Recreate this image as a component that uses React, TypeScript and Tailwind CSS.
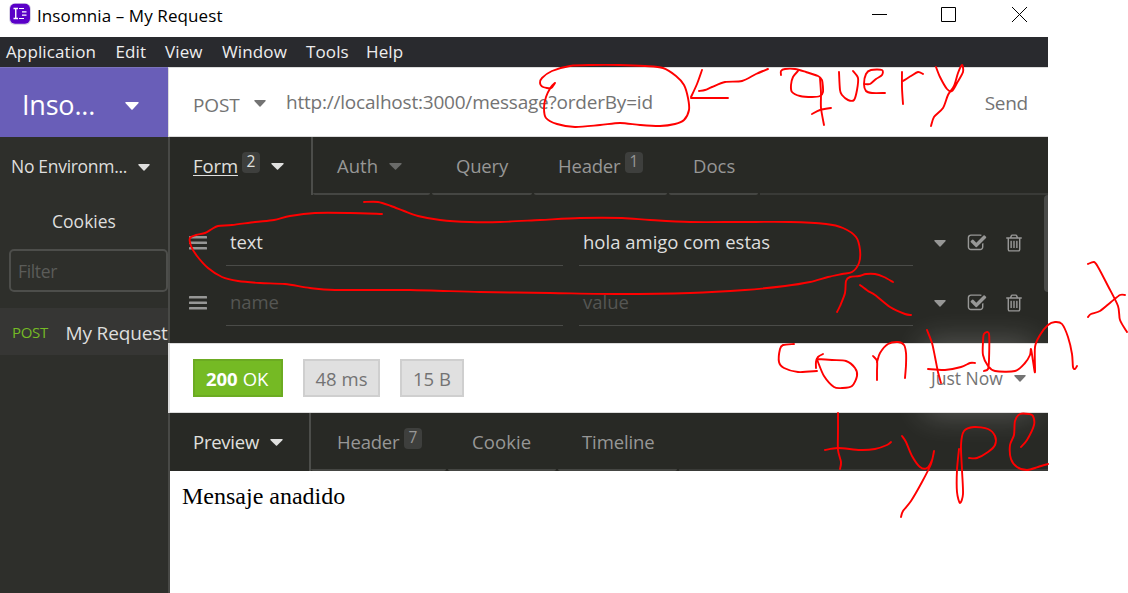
import type { ReactNode } from "react";

function T({ c = "", children }: { c?: string; children: string }) {
  return <span className={"whitespace-pre " + c}>{children}</span>;
}

function Caret({ c }: { c: string }) {
  return (
    <svg viewBox="0 0 14 8" preserveAspectRatio="none" className={"shrink-0 " + c} fill="currentColor">
      <path d="M1 0h12q1 0 .6 1L7.6 7.5q-.6.6-1.2 0L.4 1Q0 0 1 0z" />
    </svg>
  );
}

function Badge({ c, children }: { c: string; children: ReactNode }) {
  return (
    <span className={"flex h-[21px] w-[18px] shrink-0 items-center justify-center rounded-[4px] bg-[#3e3f3d] text-[15.5px] " + c}>
      {children}
    </span>
  );
}

function Logo() {
  return (
    <svg viewBox="0 0 22 22" className="h-[22px] w-[22px]">
      <rect x="0" y="0" width="22" height="22" rx="6" fill="#d9d3e6" />
      <rect x="1" y="0.7" width="20" height="20" rx="5" fill="#5a00c8" />
      <path d="M4.5 5.5h4.5M6.75 5.5v10M4.5 15.5h4.5" stroke="#fff" strokeWidth="1.4" fill="none" />
      <path d="M10 5.5h5M13 8.8h4.5M13 12.1h4.5M10 15.5h5" stroke="#fff" strokeWidth="1.2" fill="none" />
    </svg>
  );
}

function Bars() {
  return (
    <svg viewBox="0 0 18 16" className="h-4 w-[18px] shrink-0" fill="#979796">
      <rect y="1" width="18" height="2.6" rx="0.6" />
      <rect y="6.5" width="18" height="2.6" rx="0.6" />
      <rect y="12" width="18" height="2.6" rx="0.6" />
    </svg>
  );
}

function Check() {
  return (
    <svg viewBox="0 0 1792 1792" className="h-5 w-5 shrink-0" fill="#979796">
      <path d="M1472 930v318q0 119-84.5 203.5t-203.5 84.5h-832q-119 0-203.5-84.5t-84.5-203.5v-832q0-119 84.5-203.5t203.5-84.5h832q63 0 117 25 15 7 18 23 3 17-9 29l-49 49q-10 10-23 10-3 0-9-2-23-6-45-6h-832q-66 0-113 47t-47 113v832q0 66 47 113t113 47h832q66 0 113-47t47-113v-254q0-13 9-22l64-64q10-10 23-10 6 0 12 3 20 8 20 29zm231-489l-814 814q-24 24-57 24t-57-24l-430-430q-24-24-24-57t24-57l110-110q24-24 57-24t57 24l263 263 647-647q24-24 57-24t57 24l110 110q24 24 24 57t-24 57z" />
    </svg>
  );
}

function Trash() {
  return (
    <svg viewBox="0 0 1792 1792" className="h-5 w-5 shrink-0" fill="#979796">
      <path d="M704 736v576q0 14-9 23t-23 9h-64q-14 0-23-9t-9-23v-576q0-14 9-23t23-9h64q14 0 23 9t9 23zm256 0v576q0 14-9 23t-23 9h-64q-14 0-23-9t-9-23v-576q0-14 9-23t23-9h64q14 0 23 9t9 23zm256 0v576q0 14-9 23t-23 9h-64q-14 0-23-9t-9-23v-576q0-14 9-23t23-9h64q14 0 23 9t9 23zm128 724v-948h-896v948q0 22 7 40.5t14.5 27 10.5 8.5h832q3 0 10.5-8.5t14.5-27 7-40.5zm-672-1076h448l-48-117q-7-9-17-11h-317q-10 2-17 11zm928 32v64q0 14-9 23t-23 9h-96v948q0 83-47 143.5t-113 60.5h-832q-66 0-113-58.5t-47-141.5v-952h-96q-14 0-23-9t-9-23v-64q0-14 9-23t23-9h309l70-167q15-37 54-63t79-26h320q40 0 79 26t54 63l70 167h309q14 0 23 9t9 23z" />
    </svg>
  );
}

function TitleBar() {
  return (
    <header className="flex h-[37px] w-[1048px] items-start pl-[9px]">
      <div className="pt-[3px]"><Logo /></div>
      <T c="ml-1.5 pt-1 text-[17px] leading-6 tracking-[0.1px] text-black">Insomnia – My Request</T>
      <div className="ml-auto flex pt-[7px] text-black">
        <svg viewBox="0 0 15 15" className="mr-[54px] h-[15px] w-[15px]"><path d="M0 7.5h15" stroke="currentColor" /></svg>
        <svg viewBox="0 0 15 15" className="mr-[56px] h-[15px] w-[15px]"><path d="M.5.5h14v14H.5z" stroke="currentColor" fill="none" /></svg>
        <svg viewBox="0 0 15 15" className="mr-[21px] h-[15px] w-[15px]"><path d="M0 0l15 15M15 0L0 15" stroke="currentColor" /></svg>
      </div>
    </header>
  );
}

function MenuBar() {
  return (
    <nav className="flex h-[30px] w-[1048px] items-center bg-[#292a2e] pl-1.5 text-[17px] tracking-[0.12px] text-[#eeeeef]">
      <span className="w-[109.5px]"><T>Application</T></span>
      <span className="w-[49.5px]"><T>Edit</T></span>
      <span className="w-[57px]"><T>View</T></span>
      <span className="w-[84px]"><T>Window</T></span>
      <span className="w-[60px]"><T>Tools</T></span>
      <span className="w-[50px]"><T>Help</T></span>
    </nav>
  );
}

function Sidebar() {
  return (
    <aside className="flex w-[168px] shrink-0 flex-col bg-[#2e2f2b] text-[#dededd]">
      <div className="flex h-[69.5px] items-center border-t border-[#7b73bd] bg-[#695eb8] pl-[22px] text-white">
        <span className="w-[103px] pt-[5px]"><T c="text-[27px] tracking-[-0.2px]">Inso...</T></span>
        <Caret c="mt-2 h-2 w-[14px]" />
      </div>
      <div className="flex h-[59.5px] items-center pl-[11px] text-[17.5px]">
        <span className="w-[127px] pb-px"><T c="tracking-[-0.3px]">No Environm...</T></span>
        <Caret c="mt-0.5 h-[7px] w-3" />
      </div>
      <div className="flex h-[53px] items-center justify-center pb-0.5 text-[17.5px]"><T>Cookies</T></div>
      <div className="ml-[9px] flex h-[43px] w-[159px] items-center rounded-[5px] border-2 border-[#4d4e4b] pl-[7px] pt-0.5 text-[17.5px] text-[#5b5c59]">
        <T c="tracking-[-0.35px]">Filter</T>
      </div>
      <div className="mt-4 flex h-[47px] items-center overflow-hidden bg-[#363634] pl-3">
        <span className="w-[53.5px] shrink-0 pt-0.5 text-[15px] text-[#75ba24]"><T c="tracking-[-0.3px]">POST</T></span>
        <T c="pt-[3px] text-[19px] tracking-[-0.15px]">My Request</T>
      </div>
    </aside>
  );
}

function RequestBar() {
  return (
    <div className="flex h-[70px] items-center border-y border-[#dcdcdc] bg-white pl-6 text-[19px] text-[#737373]">
      <span className="w-[61px] pt-[6px]"><T c="tracking-[-0.15px]">POST</T></span>
      <span className="w-8 pt-0.5"><Caret c="h-[7px] w-3" /></span>
      <T c="tracking-[-0.21px]">http://localhost:3000/message?orderBy=id</T>
      <span className="ml-auto pr-5 pt-0.5"><T c="tracking-[-0.25px]">Send</T></span>
    </div>
  );
}

function Tab({ c, children }: { c: string; children: ReactNode }) {
  return (
    <div className={"mr-0.5 flex shrink-0 items-center rounded-b-[2px] border-b-2 border-[#454643] pt-0.5 text-[#979796] " + c}>
      {children}
    </div>
  );
}

function RequestTabs() {
  return (
    <div className="flex h-[58px] text-[18.5px]">
      <div className="flex w-[143px] shrink-0 items-center border-r-2 border-[#4c4d4a] pl-[23px] text-[#e0e0df]">
        <span className="w-[49px] underline decoration-[1px] underline-offset-2"><T c="tracking-[-0.1px]">Form</T></span>
        <Badge c="mr-[11px] -mt-2">2</Badge>
        <Caret c="h-[7px] w-[13px]" />
      </div>
      <Tab c="w-[117px] pl-6"><span className="w-[52px]"><T>Auth</T></span><Caret c="h-[7px] w-[13px] text-[#6a6b69]" /></Tab>
      <Tab c="w-[100px] pl-6"><T c="tracking-[-0.2px]">Query</T></Tab>
      <Tab c="w-[133px] pl-6"><span className="w-[67px]"><T c="tracking-[-0.2px]">Header</T></span><Badge c="-mt-2">1</Badge></Tab>
      <Tab c="w-[89px] pl-6"><T>Docs</T></Tab>
      <div className="flex-1 border-b-2 border-[#393a37]" />
    </div>
  );
}

function Row({ name, value, color }: { name: string; value: string; color: string }) {
  return (
    <div className="flex h-[60px] items-start pl-[19px]">
      <span className="mr-[19px] pt-[18px]"><Bars /></span>
      <div className={"mr-4 flex h-[49px] w-[337px] items-center border-b-[1.5px] border-[#4a4b48] pl-1 pt-px text-[18.5px] " + color}><T c="tracking-[-0.1px]">{name}</T></div>
      <div className={"flex h-[49px] w-[334px] items-center border-b-[1.5px] border-[#4a4b48] pl-1 pt-px text-[18.5px] " + color}><T>{value}</T></div>
      <div className="flex items-center pl-[21px] pt-4 text-[#979796]">
        <Caret c="mr-[21px] h-[7px] w-3" />
        <Check />
        <span className="w-[17px]" />
        <Trash />
      </div>
    </div>
  );
}

function ResponseBar() {
  return (
    <div className="-ml-0.5 flex h-[70px] items-center border-y border-l-2 border-[#dcdcdc] bg-white pl-[23px] text-[18.5px] text-[#737373]">
      <div className="mr-5 flex h-[38px] w-[90px] items-center justify-center border-2 border-[#6cab22] bg-[#75ba24] pr-0.5 pt-px text-white">
        <T c="font-bold">200</T><T c="ml-[5px] tracking-[-0.2px]">OK</T>
      </div>
      <div className="mr-5 flex h-[38px] w-[77px] items-center justify-center border-2 border-[#cfcfcf] bg-[#e0e0e0] pt-0.5"><T>48 ms</T></div>
      <div className="flex h-[38px] w-[64px] items-center justify-center border-2 border-[#cfcfcf] bg-[#e0e0e0] pt-0.5"><T>15 B</T></div>
      <div className="ml-auto mr-[22px] flex h-[60px] items-center bg-white shadow-[0_0_30px_8px_rgba(255,255,255,0.22)]">
        <span className="w-[83px] text-[17.5px]"><T>Just Now</T></span>
        <Caret c="h-[7px] w-3" />
      </div>
    </div>
  );
}

function ResponseTabs() {
  return (
    <div className="flex h-[58px] text-[18.5px]">
      <div className="flex w-[141px] shrink-0 items-center border-r-2 border-[#4c4d4a] pl-[23px] text-[#e0e0df]">
        <span className="w-[77px]"><T c="tracking-[-0.25px]">Preview</T></span>
        <Caret c="h-[7px] w-[13px]" />
      </div>
      <Tab c="w-[135px] pl-[26px]"><span className="w-[67px]"><T c="tracking-[-0.2px]">Header</T></span><Badge c="-mt-2">7</Badge></Tab>
      <Tab c="w-[108px] pl-6"><T c="tracking-[0.1px]">Cookie</T></Tab>
      <Tab c="w-[119px] pl-6"><T c="tracking-[-0.1px]">Timeline</T></Tab>
      <div className="flex-1 border-b-2 border-[#393a37]" />
    </div>
  );
}

// Pen annotations: each entry is the x,y points of one stroke.
const strokes = [
  // ring round the query string
  [555,83, 551,88, 543,87, 540,83, 542,78, 552,71, 570,66, 592,65, 620,65, 645,66, 663,68, 676,76, 684,85, 688,98, 689,110, 684,120, 675,124, 660,126, 640,125, 620,123, 600,125, 575,127, 557,124, 546,118, 544,108, 546,97, 551,87, 555,83],
  [702,70, 697,84, 691,97],
  [691,98, 728,98],
  [699,91, 705,90, 712,87, 725,82, 742,81, 756,74, 768,69],
  [781,75, 781,71, 785,69, 795,69, 806,72, 818,76, 822,80, 823,92, 820,96, 812,97, 800,96, 792,92, 791,85, 793,77, 798,71],
  [820,78, 821,93, 821,108, 824,125],
  [812,114, 820,110, 831,108],
  [839,72, 840,90, 842,95, 848,100, 854,100, 857,90, 858,78, 853,71],
  [865,84, 870,84, 876,79, 882,75, 882,70, 871,70, 866,74, 864,84, 866,91, 872,93, 885,93],
  [902,72, 902,88, 903,104],
  [903,81, 911,76, 918,72, 923,74],
  [936,67, 940,77, 947,89, 952,91, 957,83, 963,72, 962,65, 958,73, 954,86, 948,95, 943,108, 934,117, 931,126],
  // ring round the first form row
  [364,202, 378,202, 391,206, 404,211, 418,216, 440,220, 470,222, 500,222, 540,220, 580,218, 622,218, 650,220, 690,222, 740,222, 790,222, 826,224, 843,228, 856,237, 860,250, 859,263, 852,272, 842,274, 828,277, 810,282, 785,286, 745,290, 690,293, 620,294, 550,293, 480,292, 410,290, 335,290, 310,288, 285,284, 260,283, 238,281, 222,277, 208,268, 197,256, 191,246, 190,238, 196,235, 205,233, 212,229, 218,226, 232,225, 255,222, 274,220, 290,216, 315,213, 350,213, 382,214],
  [837,312, 840,306, 845,293, 846,281, 850,277, 859,276, 866,274, 875,274, 884,277, 893,282],
  [860,285, 868,291, 875,295, 890,307, 905,314, 911,315],
  // lower note
  [794,344, 783,345, 780,349, 779,362, 784,368, 798,372, 817,371],
  [823,354, 818,357, 816,362, 816,368],
  [817,359, 832,360, 846,361, 855,368, 857,376, 852,386, 842,388, 834,387, 824,376, 818,362, 817,359],
  [873,356, 877,361, 877,371, 877,380],
  [877,362, 880,353, 888,344, 898,342, 904,345, 906,353, 906,365, 905,378],
  [927,330, 932,343, 935,357, 938,372, 941,383],
  [928,369, 945,370, 961,367, 970,363, 975,363],
  [984,371, 988,369, 989,360, 989,334, 984,334, 983,342, 983,355, 988,366, 995,371, 1015,371, 1025,363, 1030,355, 1031,349, 1033,361, 1035,372, 1035,347, 1040,335, 1048,325, 1055,322, 1062,324, 1068,337, 1072,354, 1073,367, 1075,369, 1077,366],
  [1088,264, 1094,262, 1098,267, 1108,286, 1118,306, 1120,320, 1127,332],
  [1088,317, 1091,314, 1100,311, 1111,302, 1120,295, 1125,295],
  [838,413, 838,430, 838,450, 841,462, 840,469],
  [825,450, 838,448, 860,450, 875,449, 887,445, 891,442],
  [902,436, 906,442, 912,456, 920,467, 927,468, 932,460, 934,451, 931,464, 922,482, 911,501, 903,511, 901,517],
  [959,449, 957,470, 957,492, 960,503, 963,494, 962,470, 961,445, 964,431, 974,427, 988,429, 995,436, 995,445, 988,452, 977,458, 969,458],
  [1021,447, 1027,440, 1034,425, 1033,416, 1029,414, 1020,414, 1015,421, 1014,435, 1010,445, 1011,459, 1017,467, 1027,470, 1038,467, 1048,464],
];

function toPath(p: number[]) {
  const n = p.length / 2;
  const x = (i: number) => p[2 * Math.max(0, Math.min(n - 1, i))];
  const y = (i: number) => p[2 * Math.max(0, Math.min(n - 1, i)) + 1];
  let d = `M${x(0)} ${y(0)}`;
  for (let i = 0; i < n - 1; i++) {
    d += `C${x(i) + (x(i + 1) - x(i - 1)) / 7} ${y(i) + (y(i + 1) - y(i - 1)) / 7} ${x(i + 1) - (x(i + 2) - x(i)) / 7} ${y(i + 1) - (y(i + 2) - y(i)) / 7} ${x(i + 1)} ${y(i + 1)}`;
  }
  return d;
}

export default function App() {
  return (
    <div className="relative h-[593px] w-[1128px] overflow-hidden bg-white font-['Open_Sans','Noto_Sans',sans-serif]">
      <TitleBar />
      <MenuBar />
      <div className="flex h-[526px] w-[1048px] overflow-hidden">
        <Sidebar />
        <main className="flex min-w-0 flex-1 flex-col border-l-2 border-[#484946] bg-[#282925]">
          <div className="-ml-0.5 border-l border-[#dcdcdc]"><RequestBar /></div>
          <RequestTabs />
          <div className="flex h-[148px]">
            <div className="flex-1 pt-[22px]">
              <Row name="text" value="hola amigo com estas" color="text-[#dededd]" />
              <Row name="name" value="value" color="text-[#555653]" />
            </div>
            <div className="h-[97px] w-1 rounded-l bg-[#4a4b49]" />
          </div>
          <ResponseBar />
          <ResponseTabs />
          <div className="flex-1 bg-white pl-3 pt-2 font-['Liberation_Serif',serif] text-[24px] leading-[34px] text-black"><T>Mensaje anadido</T></div>
        </main>
      </div>
      <svg viewBox="0 0 1128 593" className="pointer-events-none absolute inset-0 h-full w-full" fill="none" stroke="#f00" strokeWidth="1.9" strokeLinecap="round" strokeLinejoin="round">
        {strokes.map((p, i) => <path key={i} d={toPath(p)} />)}
      </svg>
    </div>
  );
}
